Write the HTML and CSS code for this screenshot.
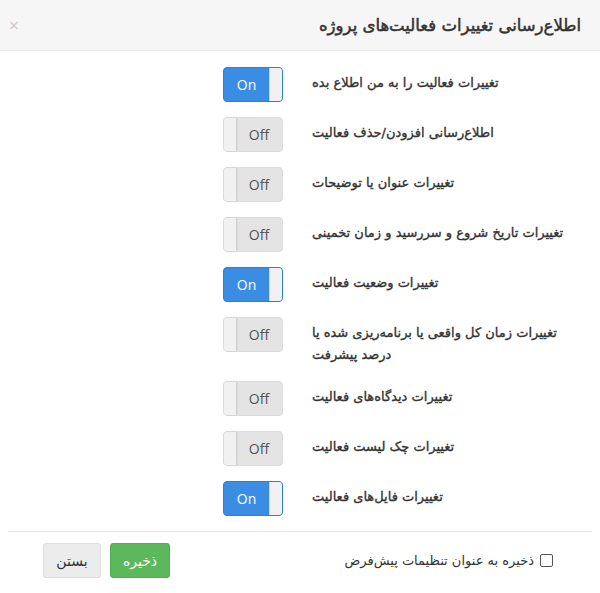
FILE: index.html
```html
<!DOCTYPE html>
<html lang="fa" dir="rtl">
<head>
<meta charset="utf-8">
<link rel="stylesheet" href="styles.css">
</head>
<body>
<div class="modal">
  <div class="modal-header">
    <h4 class="modal-title">اطلاع‌رسانی تغییرات فعالیت‌های پروژه</h4>
    <span class="close">×</span>
  </div>
  <div class="modal-body">
    <div class="row"><label class="label">تغییرات فعالیت را به من اطلاع بده</label><span class="toggle on"><span class="txt">On</span><span class="handle"></span></span></div>
    <div class="row"><label class="label">اطلاع‌رسانی افزودن/حذف فعالیت</label><span class="toggle off"><span class="txt">Off</span><span class="handle"></span></span></div>
    <div class="row"><label class="label">تغییرات عنوان یا توضیحات</label><span class="toggle off"><span class="txt">Off</span><span class="handle"></span></span></div>
    <div class="row"><label class="label">تغییرات تاریخ شروع و سررسید و زمان تخمینی</label><span class="toggle off"><span class="txt">Off</span><span class="handle"></span></span></div>
    <div class="row"><label class="label">تغییرات وضعیت فعالیت</label><span class="toggle on"><span class="txt">On</span><span class="handle"></span></span></div>
    <div class="row"><label class="label">تغییرات زمان کل واقعی یا برنامه‌ریزی شده یا<br>درصد پیشرفت</label><span class="toggle off"><span class="txt">Off</span><span class="handle"></span></span></div>
    <div class="row"><label class="label">تغییرات دیدگاه‌های فعالیت</label><span class="toggle off"><span class="txt">Off</span><span class="handle"></span></span></div>
    <div class="row"><label class="label">تغییرات چک لیست فعالیت</label><span class="toggle off"><span class="txt">Off</span><span class="handle"></span></span></div>
    <div class="row"><label class="label">تغییرات فایل‌های فعالیت</label><span class="toggle on"><span class="txt">On</span><span class="handle"></span></span></div>
  </div>
  <div class="modal-footer">
    <label class="check"><span class="box"></span>ذخیره به عنوان تنظیمات پیش‌فرض</label>
    <div class="buttons">
      <button class="btn btn-save">ذخیره</button>
      <button class="btn btn-close">بستن</button>
    </div>
  </div>
</div>
</body>
</html>
```
FILE: styles.css
```css
* { box-sizing: border-box; }
html, body { margin: 0; padding: 0; background: #fff; }
body {
  font-family: "DejaVu Sans", "Noto Sans", sans-serif;
  color: #333;
  direction: rtl;
}
.modal { width: 600px; }
.modal-header {
  height: 51px;
  background: #f6f6f6;
  border-bottom: 1px solid #ececec;
  display: flex;
  align-items: center;
  justify-content: space-between;
  padding: 0 19px 0 8px;
}
.modal-title {
  margin: 0;
  font-size: 16.5px;
  font-weight: normal;
  -webkit-text-stroke: 0.5px #333;
  color: #333;
  white-space: nowrap;
}
.close {
  color: #c9c9c9;
  font-size: 14px;
  font-family: "DejaVu Sans", sans-serif;
  line-height: 1;
}
.modal-body { padding: 16px 15px 0 0; }
.row {
  display: flex;
  align-items: flex-start;
  gap: 29px;
  margin-bottom: 15px;
}
.label {
  width: 273px;
  text-align: left;
  font-size: 13px;
  font-weight: normal;
  -webkit-text-stroke: 0.35px #333;
  line-height: 22px;
  padding-top: 5px;
  color: #333;
  white-space: nowrap;
}
.toggle {
  position: relative;
  width: 60px;
  height: 35px;
  border-radius: 4px;
  display: flex;
  align-items: center;
  font-family: "Open Sans", "Liberation Sans", sans-serif;
  font-size: 14px;
  flex: none;
}
.toggle.on {
  background: #3a8de2;
  border: 1px solid #2f7fd0;
  flex-direction: row;
}
.toggle.on .txt { color: #fff; flex: 1; text-align: center; }
.toggle.on .handle {
  width: 13px;
  height: 100%;
  background: #f1f1f1;
  border-radius: 0 3px 3px 0;
  border-left: 1px solid #c9d6e4;
  order: -1;
}
.toggle.off {
  background: #e4e4e4;
  border: 1px solid #dcdcdc;
}
.toggle.off .txt { color: #555; flex: 1; text-align: center; }
.toggle.off .handle {
  width: 12px;
  height: 100%;
  background: #f1f1f1;
  border-radius: 3px 0 0 3px;
  box-shadow: 1px 0 2px rgba(0,0,0,0.12);
}
.modal-footer {
  margin: 0 8px;
  border-top: 1px solid #e6e6e6;
  padding: 11px 39px 14px 35px;
  display: flex;
  align-items: center;
  justify-content: space-between;
}
.check {
  display: flex;
  align-items: center;
  gap: 6px;
  font-size: 13px;
  color: #333;
  white-space: nowrap;
}
.box {
  width: 13px;
  height: 13px;
  border: 1px solid #555;
  border-radius: 2px;
  background: #fff;
}
.buttons { display: flex; gap: 9px; }
.btn {
  height: 35px;
  border-radius: 3px;
  font-family: "DejaVu Sans", sans-serif;
  font-size: 14px;
  padding: 0;
  cursor: pointer;
}
.btn-save {
  width: 60px;
  background: #5db85c;
  border: 1px solid #52ad51;
  color: #fff;
}
.btn-close {
  width: 58px;
  background: #ececec;
  border: 1px solid #dedede;
  color: #333;
}
```
